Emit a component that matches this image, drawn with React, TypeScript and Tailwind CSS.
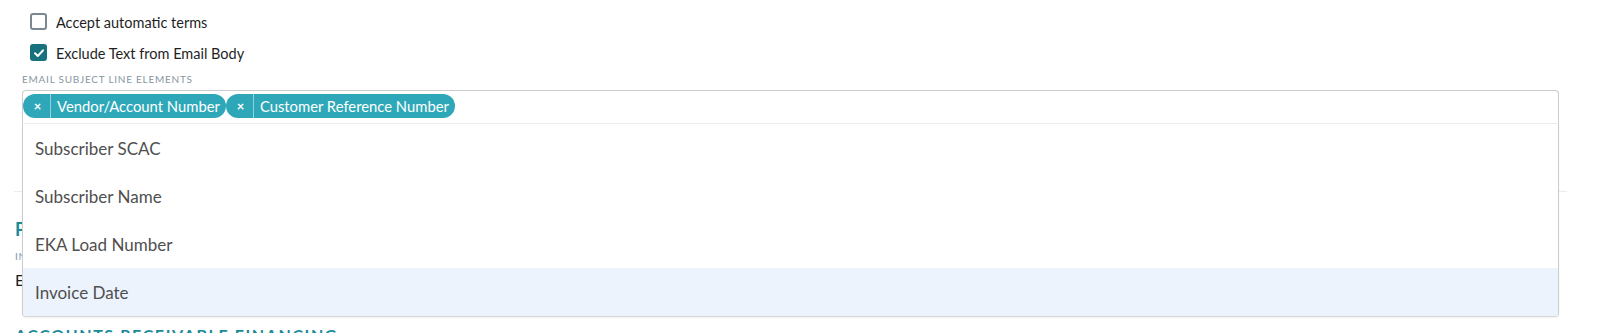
import React from "react";

function Checkbox({ checked }: { checked: boolean }) {
  if (checked) {
    return (
      <span className="flex h-[17px] w-[17px] items-center justify-center rounded-[3px] bg-[#17727e]">
        <svg width="12" height="12" viewBox="0 0 12 12" fill="none">
          <path d="M2 6.3 L4.8 9 L10 3.3" stroke="white" strokeWidth="2" strokeLinecap="round" strokeLinejoin="round" />
        </svg>
      </span>
    );
  }
  return <span className="block h-[17px] w-[17px] rounded-[3px] border-2 border-[#7b8791] bg-white" />;
}

function Chip({ label }: { label: string }) {
  return (
    <div className="flex h-[24px] items-stretch rounded-full bg-[#2ea8b8] text-white">
      <div className="flex w-[28px] items-center justify-center border-r border-[#8fd3dc] pl-[2px] text-[13px] font-bold leading-none">
        ×
      </div>
      <div className="flex items-center pl-[6px] pr-[6px] text-[14.8px] leading-none">{label}</div>
    </div>
  );
}

export default function App() {
  const options = ["Subscriber SCAC", "Subscriber Name", "EKA Load Number", "Invoice Date"];
  return (
    <div className="h-[333px] w-[1600px] overflow-hidden bg-white pl-[14px] pr-[33px] font-['Lato','Liberation_Sans',sans-serif] text-[#222]">
      <div className="px-[8px]">
        <div className="pl-[8px] pt-[13px]">
          <label className="flex h-[17px] items-center gap-[9px] text-[14.5px] leading-[17px] text-[#1f1f1f]">
            <Checkbox checked={false} />
            <span className="pt-[1px]">Accept automatic terms</span>
          </label>
          <label className="mt-[14px] flex h-[17px] items-center gap-[9px] text-[14.5px] leading-[17px] text-[#1f1f1f]">
            <Checkbox checked={true} />
            <span className="pt-[1px]">Exclude Text from Email Body</span>
          </label>
        </div>
        <div className="mt-[12px] text-[10px] leading-[12px] tracking-[0.75px] text-[#8796a1]">
          EMAIL SUBJECT LINE ELEMENTS
        </div>
        <div className="relative mt-[5px]">
          <div className="flex h-[33px] items-start rounded-t-[4px] border-x border-t border-[#cccccc] pt-[3px]">
            <Chip label="Vendor/Account Number" />
            <Chip label="Customer Reference Number" />
          </div>
          <div className="absolute left-0 right-0 top-full z-10 overflow-hidden rounded-b-[4px] border-x border-b border-t border-x-[#cccccc] border-b-[#d6d6d6] border-t-[#ececec] bg-white shadow-[0_1px_2px_rgba(0,0,0,0.06)]">
            {options.map((o, i) => (
              <div
                key={o}
                className={`flex h-[48px] items-center pl-[12px] pt-[1px] text-[17px] text-[#4f4f4f] ${i === 3 ? "bg-[#ecf3fd]" : "bg-white"}`}
              >
                {o}
              </div>
            ))}
          </div>
        </div>
      </div>
      <div className="mt-[68px] border-b border-[#ececec]" />
      <div className="pl-[1px]">
        <div className="mt-[26px] text-[18px] font-bold leading-[22px] text-[#1b8a98]">Payment Preferences</div>
        <div className="mt-[10px] text-[10px] leading-[12px] tracking-[0.75px] text-[#8796a1]">INVOICE DELIVERY METHOD</div>
        <div className="mt-[8px] text-[16px] leading-[20px] text-[#1f1f1f]">Email</div>
        <div className="mt-[35px] text-[16px] font-bold leading-[20px] tracking-[1.6px] text-[#1b8a98]">
          ACCOUNTS RECEIVABLE FINANCING
        </div>
      </div>
    </div>
  );
}
